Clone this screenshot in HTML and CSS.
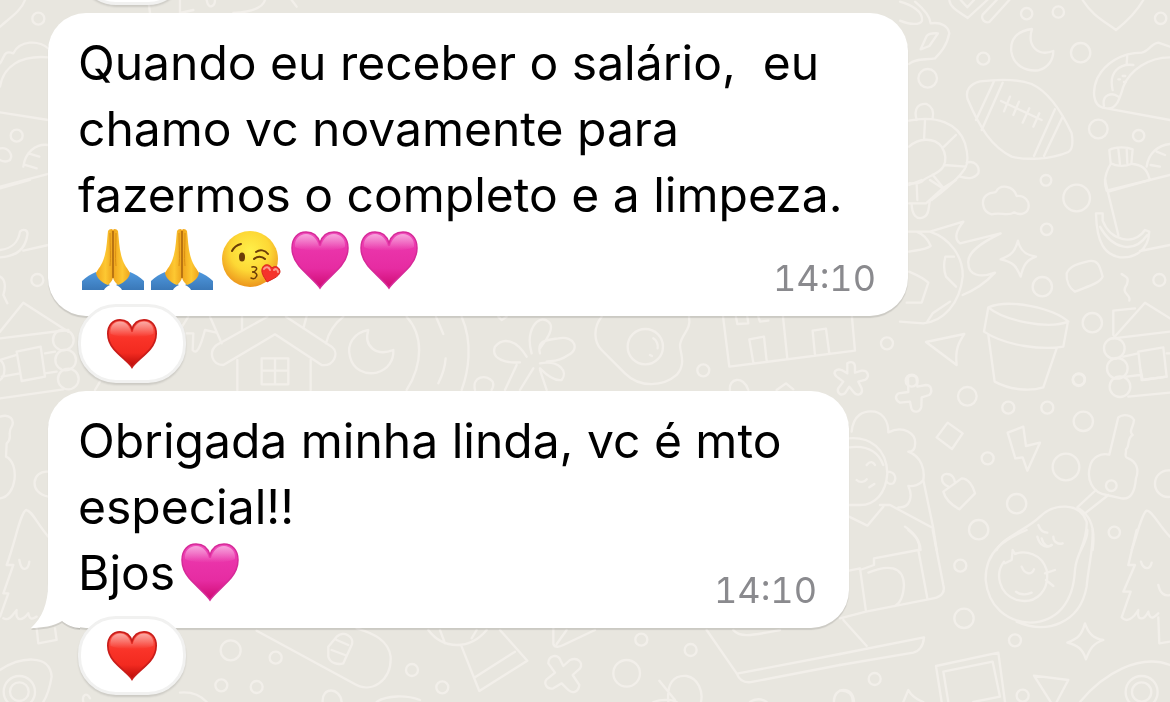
FILE: index.html
```html
<!DOCTYPE html>
<html lang="pt-BR">
<head>
    <meta charset="UTF-8">
    <title>Conversa</title>
    <link rel="stylesheet" href="styles.css">
</head>
<body>
<!-- emoji -->
<svg class="defs" aria-hidden="true">
    <defs>
        <linearGradient id="pink" x1="0" y1="0" x2="0" y2="1">
            <stop offset="0" stop-color="#f04fbd"/>
            <stop offset=".3" stop-color="#ea34aa"/>
            <stop offset=".65" stop-color="#e62ca2"/>
            <stop offset="1" stop-color="#cf0a72"/>
        </linearGradient>
        <linearGradient id="red" x1="0" y1="0" x2="0" y2="1">
            <stop offset="0" stop-color="#f8584c"/>
            <stop offset=".4" stop-color="#f93328"/>
            <stop offset=".7" stop-color="#f22a20"/>
            <stop offset="1" stop-color="#b80a08"/>
        </linearGradient>
        <linearGradient id="shine" x1="0" y1="0" x2="0" y2="1">
            <stop offset="0" stop-color="#fff" stop-opacity=".5"/>
            <stop offset="1" stop-color="#fff" stop-opacity="0"/>
        </linearGradient>
        <radialGradient id="face" cx=".5" cy=".36" r=".64">
            <stop offset="0" stop-color="#fff04a"/>
            <stop offset=".55" stop-color="#fdd835"/>
            <stop offset="1" stop-color="#ec951c"/>
        </radialGradient>
        <linearGradient id="skin" x1="0" y1="0" x2="1" y2="0">
            <stop offset="0" stop-color="#f0a51c"/>
            <stop offset=".55" stop-color="#fdc832"/>
            <stop offset="1" stop-color="#eea41c"/>
        </linearGradient>
        <linearGradient id="sleeve" x1="0" y1="0" x2="0" y2="1">
            <stop offset="0" stop-color="#4f98de"/>
            <stop offset="1" stop-color="#3a78b8"/>
        </linearGradient>
        <symbol id="pink-heart" viewBox="0 0 69 66">
            <path d="M35 60C32 55 21 46 14 38C9 32 7 26 7 20C7 10 13 4 21 4C28 4 33 8 35 15C37 8 42 4 49 4C57 4 63 10 63 20C63 26 61 32 56 38C49 46 38 55 35 60Z" fill="url(#pink)" stroke="#d62a98" stroke-width="1.5"/>
            <path d="M10 19C9 11 15 6 21 6C28 6 32 11 34 18H36C38 11 42 6 49 6C55 6 61 11 60 19C50 24 20 24 10 19Z" fill="url(#shine)"/>
        </symbol>
        <symbol id="red-heart" viewBox="0 0 58 58">
            <path d="M29 56C26 51 15 43 8 35C3 29 1 23 1 17C1 7 7 1 15 1C22 1 27 5 29 12C31 5 36 1 43 1C51 1 57 7 57 17C57 23 55 29 50 35C43 43 32 51 29 56Z" fill="url(#red)" stroke="#c91d1a" stroke-width="2"/>
            <path d="M4 17C3 8 9 3 15 3C22 3 26 8 28 15H30C32 8 36 3 43 3C49 3 55 8 54 17C44 22 14 22 4 17Z" fill="url(#shine)"/>
        </symbol>
        <symbol id="pray" viewBox="0 0 69 66">
            <path d="M4 53C8 49 13 46 18 44C21 49 26 54 32 57C29 58 27 60 26 62H4Z" fill="url(#sleeve)"/>
            <path d="M66 53C62 49 57 46 52 44C49 49 44 54 38 57C41 58 43 60 44 62H66Z" fill="url(#sleeve)"/>
            <path d="M35 2C34 0 31 1 30 3C29 11 29 21 26 30C24 37 20 41 18 45C19 51 25 55 30 57C33 54 35 52 35 49Z" fill="url(#skin)"/>
            <path d="M35 2C36 0 39 1 40 3C41 11 41 21 44 30C46 37 50 41 52 45C51 51 45 55 40 57C37 54 35 52 35 49Z" fill="url(#skin)"/>
            <path d="M35 3V50" stroke="#a8650f" stroke-width="1.5"/>
            <path d="M32 5C32 18 33 28 32 38M38 5C38 18 37 28 38 38" fill="none" stroke="#d98e14" stroke-width="1"/>
        </symbol>
        <symbol id="kiss" viewBox="0 0 69 66">
            <circle cx="34" cy="31" r="28" fill="url(#face)"/>
            <ellipse cx="26" cy="29" rx="3" ry="4.5" fill="#6b3d08"/>
            <path d="M16 23C18 19 21 17 25 16M40 24C44 21 49 22 52 26M38 31C41 28 46 28 49 31" fill="none" stroke="#6b3d08" stroke-width="2" stroke-linecap="round"/>
            <path d="M36 39C39 38 42 40 40 42C39 44 37 44 36 44C40 44 42 47 40 49C39 51 37 51 35 50" fill="none" stroke="#6b3d08" stroke-width="1.5" stroke-linecap="round"/>
            <path d="M51 54C49 50 45 46 46 41C47 36 53 35 56 40C59 37 64 39 64 44C63 49 56 51 51 54Z" fill="#f5332b" stroke="#d8251e" stroke-width="1"/>
            <path d="M48 41C50 38 53 39 54 42M58 42C60 40 62 42 62 44" fill="none" stroke="#fb9a8e" stroke-width="2" stroke-linecap="round"/>
        </symbol>
    </defs>
</svg>

<!-- wallpaper doodles -->
<svg class="wallpaper" viewBox="0 0 1170 702" preserveAspectRatio="xMinYMin slice" aria-hidden="true">
    <!-- top right: football, moon, taco, turtle -->
    <g transform="translate(900 0) scale(.3333)">
        <path d="M0 5C35 15 70 35 66 62C60 75 30 75 0 62M45 5C75 30 90 50 92 70C125 65 145 80 148 100C140 140 120 160 105 175C75 180 45 175 27 192M62 148L80 108C90 97 105 100 114 100L88 138Z"/>
        <path d="M148 0C150 25 185 40 203 54L262 0M182 0L202 22L222 0M290 0L248 44C242 58 255 70 268 66L328 0M548 0C575 45 615 65 648 90C680 65 710 35 730 0"/>
        <circle cx="380" cy="41" r="17"/><circle cx="475" cy="36" r="17"/><circle cx="782" cy="55" r="17"/>
        <circle cx="250" cy="176" r="18"/><circle cx="542" cy="158" r="29"/><circle cx="83" cy="235" r="28"/>
        <circle cx="595" cy="387" r="28"/><circle cx="716" cy="407" r="17"/><circle cx="438" cy="541" r="16"/>
        <path d="M396 87C350 92 330 120 334 155C340 195 375 215 415 211C445 203 460 180 460 153C415 170 380 140 396 87Z"/>
        <path d="M240 244C290 238 350 235 395 252C445 275 485 335 515 400C520 430 515 450 505 456C450 480 375 480 335 470C275 440 240 385 203 298C195 270 210 252 240 244ZM282 244L228 360M308 248L245 390M465 328L402 468M488 350L432 468"/>
        <path d="M303 303L425 360M330 290L312 334M357 305L340 345M388 325L368 368M418 340L400 380"/>
        <path d="M810 140L775 128C755 130 745 155 725 158C665 158 615 190 592 235C575 275 580 315 608 323L810 360M810 172C745 172 690 210 670 260C658 300 650 325 625 325M700 195C660 190 625 215 638 270M682 165L680 192M612 318C605 285 635 275 655 290M655 238H660M668 228H676M672 246H678"/>
        <path d="M27 362C110 345 175 370 195 430C205 465 205 490 195 505C170 545 120 580 95 600M50 360C40 325 55 310 80 312C98 320 102 335 98 355M75 362L72 420M27 440C55 415 100 410 125 440C140 465 138 485 130 500C115 525 85 525 65 545C45 555 35 548 27 550M132 440L168 405M132 495L198 500M98 524L132 566M50 550L52 600M200 488C225 480 240 500 235 520C220 540 200 535 180 530"/>
        <path d="M628 450C645 440 680 440 698 448L694 492C675 500 650 500 632 490ZM655 446L660 492M680 445L682 490M632 492C615 520 610 545 620 572L810 525M698 492C725 495 740 505 748 535M740 500C745 460 775 435 810 432M770 455L795 465M752 495L780 500"/>
    </g>
    <!-- cloud, turtle tail, sparkle, banana, pot, cabin -->
    <g transform="translate(900 180) scale(.3333)">
        <path d="M275 103C245 95 240 55 265 42C275 35 285 40 288 35C300 12 340 15 350 48C375 45 390 65 385 85C380 105 355 105 342 97C325 110 300 95 275 103Z"/>
        <circle cx="530" cy="54" r="40"/><circle cx="440" cy="148" r="17"/><circle cx="427" cy="320" r="29"/>
        <circle cx="577" cy="428" r="29"/><circle cx="778" cy="300" r="18"/><circle cx="537" cy="598" r="18"/><circle cx="35" cy="602" r="18"/>
        <path d="M27 15L65 0M90 0L128 25L168 0M128 25L78 70H27M35 70C35 105 50 120 70 112C90 105 85 75 90 62"/>
        <path d="M0 155H90L190 125C170 150 160 175 180 190L302 160C250 185 200 215 205 250C205 285 240 295 285 278C255 310 225 330 188 345M90 155C150 175 190 230 188 290C180 370 130 425 70 430L0 425M27 215C50 210 75 210 92 198C85 180 75 165 50 155M162 230H136C130 255 130 270 138 290L168 320M27 275C50 285 65 290 85 308L65 368H20M82 425L98 400L150 365"/>
        <path d="M354 182C360 210 375 225 408 230C380 240 370 255 362 290C350 260 340 245 302 238C335 225 345 215 354 182Z"/>
        <path d="M500 280C510 255 540 250 560 245C595 235 600 260 608 290C600 310 560 320 525 335C510 325 498 305 500 280Z"/>
        <path d="M615 0L655 165M625 35L750 0M720 213L810 195M588 100H608V122C630 180 700 200 735 150L748 155C745 215 700 235 660 232C615 225 590 190 588 100ZM600 140C635 205 700 225 742 165"/>
        <path d="M665 282C675 290 690 290 680 315C660 340 695 345 688 362"/>
        <path d="M265 382C330 355 460 385 505 425C440 450 310 420 265 382ZM265 382L252 455C320 500 430 510 490 500L503 430M265 465L284 605C330 630 390 635 430 622L470 505"/>
        <path d="M78 486L193 462C175 490 165 510 170 555Z"/>
        <path d="M640 465V392L705 385M640 475L735 368L810 415M640 475L810 455M715 515L790 502L800 590L725 600ZM670 530L715 520M680 590L720 585M800 520H810"/>
        <circle cx="643" cy="505" r="31"/><circle cx="652" cy="565" r="31"/><circle cx="660" cy="620" r="31"/>
    </g>
    <!-- plus, bolt, key, girl -->
    <g transform="translate(840 370) scale(.3333)">
        <path d="M204 22C215 12 232 18 230 30L232 50L258 45C275 45 278 65 268 75L245 82L244 110C240 128 220 130 214 115L210 95L180 98C165 90 165 78 175 70L205 66Z"/>
        <path d="M865 80L990 68M902 0L908 30L980 20"/>
        <circle cx="382" cy="79" r="28"/><circle cx="505" cy="113" r="18"/><circle cx="622" cy="113" r="18"/><circle cx="716" cy="30" r="18"/>
        <circle cx="730" cy="154" r="29"/><circle cx="678" cy="291" r="40"/><circle cx="443" cy="265" r="18"/><circle cx="530" cy="401" r="29"/>
        <circle cx="416" cy="479" r="29"/><circle cx="823" cy="487" r="17"/><circle cx="985" cy="341" r="40"/>
        <path d="M323 158L368 190L336 237L290 202ZM310 365L365 325C385 325 400 350 405 370L358 418C335 405 315 385 310 365ZM325 350C300 340 300 310 322 312C335 312 345 325 345 340"/>
        <path d="M503 188L550 170L558 228L600 218L562 302L548 262L526 265Z"/>
        <path d="M835 142C850 130 875 135 882 150C880 175 865 180 878 195C860 205 870 230 858 238C860 250 850 262 865 265C890 275 898 300 888 325C885 360 875 390 845 385L800 375C755 370 740 325 750 290C755 260 785 248 808 254ZM712 412L768 360M738 428L805 375"/>
        <circle cx="814" cy="347" r="16"/>
        <path d="M35 185C40 135 70 120 105 125C130 132 145 155 145 187C190 165 230 190 225 225C225 240 215 245 205 245C245 260 255 300 250 330C240 345 220 350 205 348C220 380 210 415 175 412M27 205C90 200 140 235 142 310C138 370 105 405 60 405H27M27 232C80 225 115 245 130 285M142 305C165 305 172 325 160 340C150 345 142 338 140 335M80 285C90 272 100 275 105 285M50 330C60 340 75 335 80 328M88 352L103 342M250 330L280 475M120 405H150L280 475L290 540M27 440L82 467L130 410M195 470C225 490 240 515 242 540"/>
        <path d="M875 540C890 500 905 430 920 422C935 420 960 470 990 500M470 540C490 500 560 480 600 440C640 400 720 395 740 455C742 490 730 520 722 540M715 415C760 440 765 490 758 540M595 465C600 480 610 488 622 488M592 500C600 530 620 535 635 525M640 500C640 515 655 525 668 520"/>
    </g>
    <!-- avocado, armchair, frame, tree -->
    <g transform="translate(840 530) scale(.3333)">
        <path d="M560 0C500 25 435 60 437 150C445 230 500 275 570 278C650 275 700 220 705 120C710 60 745 40 742 0M530 275C620 315 720 280 740 170C745 110 760 60 758 0M492 95C465 130 475 190 530 210C590 225 630 180 620 120C605 70 555 60 525 72L518 60L515 90L495 100M545 110C555 135 575 135 582 118M528 185C540 195 560 195 575 188M615 130L645 120M618 150L640 168M605 25C610 45 625 55 635 45"/>
        <path d="M27 122L60 115L78 245L280 205C310 200 315 180 310 165L278 0M60 120L102 105V85L235 60L262 205M85 128C140 105 190 105 192 165C190 200 180 220 165 228M205 0C230 20 240 35 238 60M0 265L78 245M10 270L80 348M0 372L252 322C250 350 235 365 220 368L0 405"/>
        <circle cx="361" cy="107" r="18"/><circle cx="372" cy="265" r="29"/><circle cx="525" cy="331" r="18"/><circle cx="104" cy="447" r="18"/><circle cx="548" cy="497" r="18"/>
        <circle cx="905" cy="486" r="29"/><circle cx="905" cy="486" r="48"/>
        <path d="M735 280C745 310 760 325 790 330C760 340 750 355 738 388C728 355 710 345 682 338C715 325 725 315 735 280Z"/>
        <path d="M305 516L288 408L475 368L495 516M325 516L310 425L458 395L480 500L400 516M582 437L685 450L650 516M632 516L582 437M720 516C790 430 900 370 990 405M190 516L205 480C215 500 235 510 250 516M0 482C25 480 40 495 38 516"/>
        <path d="M890 0L865 105H885L850 185H872L845 262C860 280 880 265 895 240C890 270 910 275 925 245C930 275 945 260 955 250M903 95C910 120 930 120 935 98M955 262L958 340L990 335M955 165C960 190 975 200 990 195"/>
    </g>
    <!-- middle strip: house, moon, flower -->
    <g transform="translate(180 300) scale(.3333)">
        <path d="M172 270V180M392 270V180M262 50L110 135C85 155 95 195 130 195L285 103L425 195C460 200 480 160 455 140L318 50M245 175H325V253H245ZM285 175V253M245 212H325M186 90V30M370 85L385 30M438 130C445 100 465 70 490 50"/>
        <path d="M20 100L40 100L38 150C50 165 60 145 75 90L110 98M90 50L125 130M0 90L25 50"/>
        <path d="M565 90C520 98 500 135 510 170C520 210 555 225 590 218C625 208 642 180 640 150C590 170 550 140 565 90Z"/>
        <path d="M680 50C730 105 730 190 680 270M768 50L790 102M797 175C795 205 785 230 775 250M845 50C880 130 865 215 845 270"/>
        <path d="M885 270C875 230 920 220 938 245C942 255 940 262 935 270M955 50L965 60L980 50"/>
        <path d="M1055 160C1035 90 1075 40 1105 65C1130 85 1090 130 1080 145M1080 160C1070 120 1100 120 1135 115C1185 105 1200 150 1165 165C1130 190 1110 180 1100 185M1080 190C1140 180 1165 215 1145 240C1120 245 1090 215 1080 205M1080 210L1100 270M1060 205L1020 270M1040 170C1010 120 970 110 945 140C930 180 985 190 1020 187M1010 195L975 270"/>
    </g>
    <!-- egg, building, asterisk -->
    <g transform="translate(500 300) scale(.3333)">
        <path d="M305 50C280 80 280 125 305 150L375 220C420 265 490 260 530 225C560 190 540 160 540 135C545 100 575 90 567 50M460 115C470 120 475 135 473 145M450 165L456 168"/>
        <circle cx="436" cy="140" r="53"/><circle cx="610" cy="211" r="18"/><circle cx="1161" cy="130" r="18"/>
        <path d="M668 40L688 200L1065 152L1055 40M848 40L862 175M760 188L748 118L792 110L800 182M945 165L938 92L978 86L988 160M708 50L712 72L745 70L742 50M775 50L780 65L805 62M690 270C685 235 730 225 745 270M830 270L858 250L880 268"/>
        <path d="M1042 190C1055 182 1065 188 1065 200V218L1085 212C1105 210 1110 230 1095 240L1075 245L1085 265C1090 285 1070 290 1060 275L1048 260L1035 280C1020 290 1010 275 1015 265L1030 245L1010 230C995 215 1010 205 1025 210L1042 220Z"/>
    </g>
    <!-- left edge -->
    <g transform="scale(.3333)">
        <path d="M0 80C35 50 65 30 75 0M0 190C15 170 10 150 40 160C60 120 115 120 145 145M0 260C10 200 60 165 145 172M0 337L145 360M0 560L145 522M0 445C25 440 40 465 30 480C15 490 0 480 0 480M70 500C75 460 105 430 145 435M85 460L118 470M75 495L110 505"/>
        <circle cx="115" cy="56" r="18"/><circle cx="50" cy="407" r="18"/><circle cx="112" cy="840" r="18"/>
        <path d="M445 0L450 39M540 0V39L580 30M620 0C625 30 645 20 645 0M700 39C760 35 790 20 795 0M875 0L890 20"/>
    </g>
    <g transform="translate(0 180) scale(.3333)">
        <path d="M0 25L90 0M0 210C40 205 55 185 60 155C70 145 85 150 82 165C75 215 40 230 0 232M70 212L145 195M0 290C20 300 15 330 10 345L22 370"/>
        <path d="M0 455L70 368L205 455M0 475L205 450M50 515L122 500L135 590L65 603ZM0 540L50 525M135 520L165 515M5 590L60 580M135 580L170 575M0 655L190 628M0 540C20 555 15 590 0 600"/>
        <circle cx="190" cy="480" r="31"/><circle cx="197" cy="540" r="31"/><circle cx="205" cy="597" r="31"/>
        <path d="M285 630L300 605"/>
    </g>
    <g transform="translate(0 310) scale(.3333)">
        <path d="M0 320C30 310 45 330 35 350C20 370 40 385 20 400L18 440C60 460 50 560 0 565M145 485C95 480 85 550 145 560M20 765C45 700 60 610 78 600C95 600 110 640 145 680M20 765H40L10 850H25L0 920M58 750C65 790 85 780 88 755M10 925C30 935 40 910 50 900C45 940 70 930 85 910C90 935 100 925 110 920M110 955L115 1000L170 990L165 955M0 1080C60 1040 150 1030 155 1100C150 1130 140 1160 130 1176"/>
        <circle cx="58" cy="1145" r="28"/><circle cx="58" cy="1145" r="47"/>
        <path d="M250 1176C245 1155 260 1145 270 1165"/>
    </g>
    <!-- bottom strip -->
    <g transform="translate(180 620) scale(.3333)">
        <path d="M230 32L520 190C575 225 635 180 632 110C625 60 580 40 530 25M445 80L470 50C490 30 525 50 515 75L490 130C475 135 450 130 445 110ZM470 60L505 75M455 90L495 105M0 218C30 215 60 225 80 246M428 246C425 200 480 200 485 246M590 246C620 225 680 225 720 240M745 30C790 90 870 90 920 30M780 30L795 70M890 30L875 55M845 80L898 213L1042 122L960 30M885 172L1005 95"/>
        <circle cx="152" cy="91" r="30"/><circle cx="287" cy="113" r="18"/><circle cx="124" cy="196" r="18"/><circle cx="230" cy="201" r="18"/><circle cx="696" cy="150" r="18"/><circle cx="787" cy="202" r="18"/>
    </g>
    <g transform="translate(520 620) scale(.3333)">
        <path d="M100 25V72C105 85 120 80 130 75L225 30M110 72L140 30M85 130C85 105 115 100 122 122L130 138L150 120C175 110 190 130 180 145L158 165L178 195C175 220 155 220 145 210L125 190L100 205C80 210 70 190 80 178L105 158Z"/>
        <path d="M560 30L650 160C660 185 680 190 700 185L960 135M655 160L960 102M640 30C660 55 700 45 780 30M445 246C440 190 460 165 500 168C535 175 550 215 543 246M418 182L465 240M400 246C430 235 460 240 470 246M942 246C940 200 1000 195 1002 246M690 246C705 235 725 235 740 246"/>
        <circle cx="364" cy="59" r="18"/><circle cx="512" cy="90" r="18"/><circle cx="320" cy="160" r="40"/>
    </g>
</svg>

<main class="chat">
    <div class="message message-cut">
        <button class="reaction" type="button" aria-label="Reações">
            <svg class="reaction-heart"><use href="#red-heart"/></svg>
        </button>
    </div>

    <div class="message">
        <div class="bubble bubble-wide">
            <p class="text">Quando eu receber o salário,&nbsp; eu<br>chamo vc novamente para<br>fazermos o completo e a limpeza.<br><svg class="emoji" role="img" aria-label="mãos juntas"><use href="#pray"/></svg><svg class="emoji" role="img" aria-label="mãos juntas"><use href="#pray"/></svg><svg class="emoji" role="img" aria-label="beijo"><use href="#kiss"/></svg><svg class="emoji" role="img" aria-label="coração rosa"><use href="#pink-heart"/></svg><svg class="emoji" role="img" aria-label="coração rosa"><use href="#pink-heart"/></svg></p>
            <time class="time">14:10</time>
        </div>
        <button class="reaction" type="button" aria-label="Reações">
            <svg class="reaction-heart"><use href="#red-heart"/></svg>
        </button>
    </div>

    <div class="message">
        <div class="bubble">
            <svg class="tail" viewBox="0 0 50 46" aria-hidden="true">
                <path d="M18 0C18 20 12 34 1 44C12 44 24 42 32 37C37 41 43 44 50 44V0Z"/>
            </svg>
            <p class="text">Obrigada minha linda, vc é mto<br>especial!!<br>Bjos<svg class="emoji" role="img" aria-label="coração rosa"><use href="#pink-heart"/></svg></p>
            <time class="time">14:10</time>
        </div>
        <button class="reaction" type="button" aria-label="Reações">
            <svg class="reaction-heart"><use href="#red-heart"/></svg>
        </button>
    </div>
</main>
</body>
</html>
```
FILE: styles.css
```css
body{
    margin: 0;
    background: #e8e6df;
    font-family: Inter, "Liberation Sans", sans-serif;
    color: #000;
}
.defs{
    position: absolute;
    width: 0;
    height: 0;
}
.wallpaper{
    position: fixed;
    top: 0;
    left: 0;
    width: 100%;
    height: 100%;
    fill: none;
    stroke: #f2efea;
    stroke-width: 7;
    stroke-linecap: round;
    stroke-linejoin: round;
}
.chat{
    position: relative;
    display: flex;
    flex-direction: column;
    gap: 8px;
    height: 100vh;
    padding-left: 48px;
    overflow: hidden;
}
.message{
    flex: none;
}
/* older message, scrolled out at the top */
.message-cut{
    margin-top: -62px;
}
.bubble{
    position: relative;
    display: grid;
    box-sizing: border-box;
    width: 801px;
    max-width: 100%;
    padding: 17px 32px 22px 30px;
    border-radius: 38px;
    background: #fff;
    box-shadow: 0 2px 1px rgba(0, 0, 0, .12);
}
.bubble-wide{
    width: 860px;
}
.text,
.time{
    grid-area: 1 / 1;
}
.text{
    margin: 0;
    font-size: 48px;
    line-height: 66px;
    white-space: nowrap;
}
.time{
    align-self: end;
    justify-self: end;
    font-size: 36px;
    line-height: 32px;
    font-variant-numeric: tabular-nums;
    color: #8a8a8e;
}
.emoji{
    width: 69px;
    height: 66px;
    vertical-align: top;
}
.tail{
    position: absolute;
    left: -18px;
    bottom: -2px;
    width: 50px;
    height: 46px;
    fill: #fff;
    filter: drop-shadow(0 2px 0 rgba(0, 0, 0, .1));
}
.reaction{
    position: relative;
    display: flex;
    align-items: center;
    justify-content: center;
    box-sizing: border-box;
    width: 108px;
    height: 79px;
    margin: -12px 0 0 30px;
    padding: 0;
    border: 3px solid #f1f1f0;
    border-radius: 38px;
    background: #fff;
    box-shadow: 0 2px 2px rgba(0, 0, 0, .12);
}
.reaction-heart{
    width: 50px;
    height: 50px;
}
```
